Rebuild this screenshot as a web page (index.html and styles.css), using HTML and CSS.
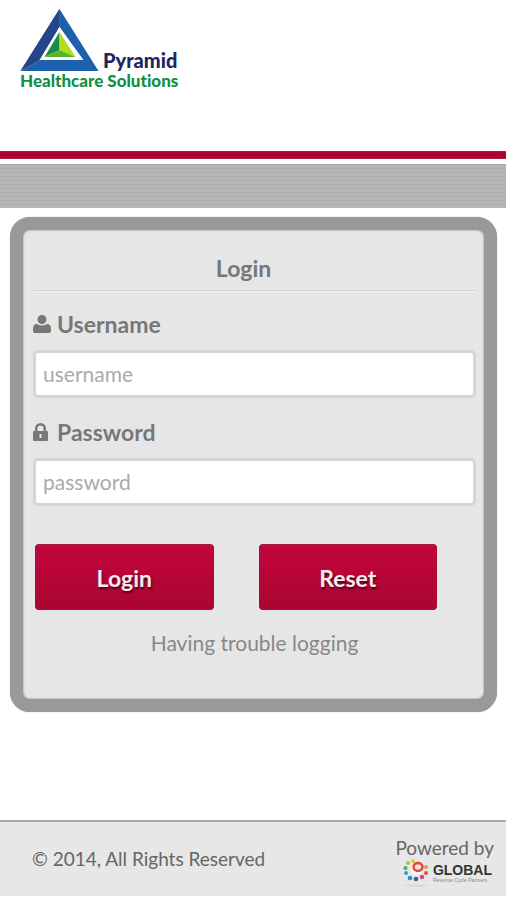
FILE: index.html
```html
<!DOCTYPE html>
<html lang="en">
<head>
<meta charset="utf-8">
<meta name="viewport" content="width=device-width, initial-scale=1">
<title>Pyramid Healthcare Solutions - Login</title>
<link rel="stylesheet" href="styles.css">
</head>
<body>
<header class="header">
  <div class="brand">
    <div class="brand-top">
      <svg class="brand-mark" viewBox="0 0 78 62" aria-hidden="true">
        <path d="M39 0 0 62 39 18Z" fill="#203a7c"/>
        <path d="M39 0 78 62H0L20 51H63L39 18Z" fill="#1d61ae"/>
        <path d="M39 0 0 62 20 51 39 18Z" fill="#25458b"/>
        <path d="M39 18 19 51H62Z" fill="#fff"/>
        <path d="M39 23 24 48 39 41Z" fill="#168d43"/>
        <path d="M39 23 55 48 39 41Z" fill="#b4dc20"/>
        <path d="M24 48 39 41 55 48Z" fill="#57b52b"/>
      </svg>
      <span class="brand-name">Pyramid</span>
    </div>
    <span class="brand-sub">Healthcare Solutions</span>
  </div>
</header>
<div class="rule"></div>
<div class="stripes"></div>
<main class="main">
  <form class="panel">
    <h1 class="title">Login</h1>
    <label class="label" for="username">
      <svg class="icon" viewBox="0 0 18 20" aria-hidden="true"><circle cx="9" cy="5.500" r="4.500"/><path d="M4 10Q9 13 14 10Q18 10 18 15V17Q18 19 15 19H3Q0 19 0 17V15Q0 10 4 10Z"/></svg>
      Username
    </label>
    <input class="field" id="username" type="text" placeholder="username">
    <label class="label" for="password">
      <svg class="icon" viewBox="0 0 18 20" aria-hidden="true"><path fill-rule="evenodd" d="M2 9V6.500a5.500 5.500 0 0 1 11 0V9h1q1 0 1 1v8q0 1-1 1H1q-1 0-1-1v-8q0-1 1-1ZM4.500 9h6V6.500a3 3 0 0 0-6 0ZM6.500 12v4h2v-4Z"/></svg>
      Password
    </label>
    <input class="field" id="password" type="password" placeholder="password">
    <div class="actions">
      <button class="button" type="submit">Login</button>
      <button class="button" type="reset">Reset</button>
    </div>
    <a class="help" href="#">Having trouble logging</a>
  </form>
</main>
<footer class="footer">
  <span class="copyright">© 2014, All Rights Reserved</span>
  <div class="powered">
    <span class="powered-text">Powered by</span>
    <div class="partner">
      <svg class="partner-mark" viewBox="0 0 26 28" aria-hidden="true">
        <ellipse cx="13" cy="26.500" rx="11" ry="1" fill="#d6d6d6"/>
        <circle cx="14" cy="10" r="6" fill="#fff"/>
        <ellipse cx="15" cy="8" rx="4.500" ry="4" fill="#f6dcd6" stroke="#e04a35" stroke-width="2.500"/>
        <circle cx="5" cy="4" r="2" fill="#a5c83b"/>
        <circle cx="10" cy="2" r="2" fill="#e9c43c"/>
        <circle cx="2.500" cy="9" r="2" fill="#3dad78"/>
        <circle cx="3" cy="14" r="2" fill="#27a5b5"/>
        <circle cx="7" cy="19" r="2.300" fill="#2b8fc8"/>
        <circle cx="13" cy="20" r="2.300" fill="#315ba8"/>
        <circle cx="19" cy="18" r="2.300" fill="#d34b85"/>
        <circle cx="23" cy="14" r="2" fill="#e3473d"/>
        <circle cx="23" cy="8" r="2" fill="#ee9252"/>
      </svg>
      <div class="partner-text">
        <span class="partner-name">GLOBAL</span>
        <span class="partner-sub">Revenue Cycle Partners</span>
      </div>
    </div>
  </div>
</footer>
</body>
</html>
```
FILE: styles.css
```css
* {
  box-sizing: border-box;
}

body {
  margin: 0;
  min-height: 100vh;
  padding-bottom: 4px;
  display: flex;
  flex-direction: column;
  background: #fff;
  color: #777;
  font-family: Lato, "Liberation Sans", sans-serif;
}

.header {
  height: 151px;
  padding: 9px 20px;
}

.brand {
  display: inline-flex;
  flex-direction: column;
  font-weight: 900;
  font-variant-ligatures: none;
}

.brand-top {
  display: flex;
  align-items: flex-end;
  gap: 4px;
}

.brand-mark {
  width: 79px;
  height: 62px;
}

.brand-name {
  color: #1d285f;
  font-size: 20px;
  line-height: 22px;
}

.brand-sub {
  color: #119044;
  font-size: 17px;
  line-height: 20px;
  white-space: nowrap;
}

.rule {
  height: 8px;
  background: #b00030;
  border: solid #a51d43;
  border-width: 1px 0;
}

.stripes {
  height: 44px;
  margin-top: 5px;
  border-top: 1px solid #a5a5a5;
  background: repeating-linear-gradient(#b6b6b6 0 3px, #acacac 3px 4px);
}

.main {
  padding: 9px 9px 0 10px;
}

.panel {
  min-height: 495px;
  padding: 10px 8px 40px 10px;
  display: flex;
  flex-direction: column;
  border: 13px solid #999;
  border-radius: 20px;
  background: #e6e6e6;
  background-clip: padding-box;
  box-shadow: inset 0 0 2px #777, 0 0 1px #999;
}

.title {
  margin: 0 0 15px;
  padding: 13px 22px 7px 0;
  border-bottom: 1px solid #d2d2d2;
  box-shadow: 0 1px #f3f3f3;
  font-size: 23px;
  line-height: 30px;
  text-align: center;
  font-weight: 700;
}

.label {
  height: 36px;
  display: flex;
  align-items: center;
  gap: 6px;
  font-size: 23px;
  font-weight: 700;
}

.icon {
  width: 18px;
  height: 20px;
  fill: #777;
}

.field {
  width: 100%;
  height: 48px;
  margin: 8px 0 16px;
  padding: 0 7px 2px;
  border: 3px solid #d5d5d5;
  border-radius: 5px;
  background: #fff;
  color: #777;
  font: 21px Lato, sans-serif;
}

.field::placeholder {
  color: #aaa;
}

.actions {
  display: grid;
  grid-template-columns: 1fr 1fr;
  gap: 45px;
  margin: 22px 39px 0 2px;
}

.button {
  height: 66px;
  border: 1px solid #a80b37;
  border-top: 2px solid #a41b40;
  border-radius: 4px;
  background: linear-gradient(#c3053d, #a90532);
  color: #f8e9ed;
  font: 700 23px Lato, sans-serif;
  text-shadow: 1px 2px 2px #4f0018;
}

.help {
  align-self: center;
  margin-top: 18px;
  color: #888;
  font-size: 21px;
  line-height: 30px;
  text-decoration: none;
}

.footer {
  min-height: 76px;
  margin-top: auto;
  padding: 14px 12px 6px 32px;
  display: flex;
  align-items: flex-start;
  justify-content: space-between;
  border-top: 2px solid #aaa;
  background: #e7e7e7;
  color: #666;
}

.copyright {
  padding-top: 11px;
  font-size: 19px;
  line-height: 24px;
}

.powered {
  display: flex;
  flex-direction: column;
  align-items: flex-end;
}

.powered-text {
  font-size: 19px;
  line-height: 23px;
}

.partner {
  display: flex;
  gap: 4px;
  padding-right: 2px;
}

.partner-mark {
  width: 26px;
  height: 28px;
}

.partner-text {
  display: flex;
  flex-direction: column;
  padding-top: 4px;
}

.partner-name {
  color: #333;
  font: 700 14px/14px "Liberation Sans", sans-serif;
}

.partner-sub {
  color: #888;
  font: 5px/6px "Liberation Sans", sans-serif;
}
```
